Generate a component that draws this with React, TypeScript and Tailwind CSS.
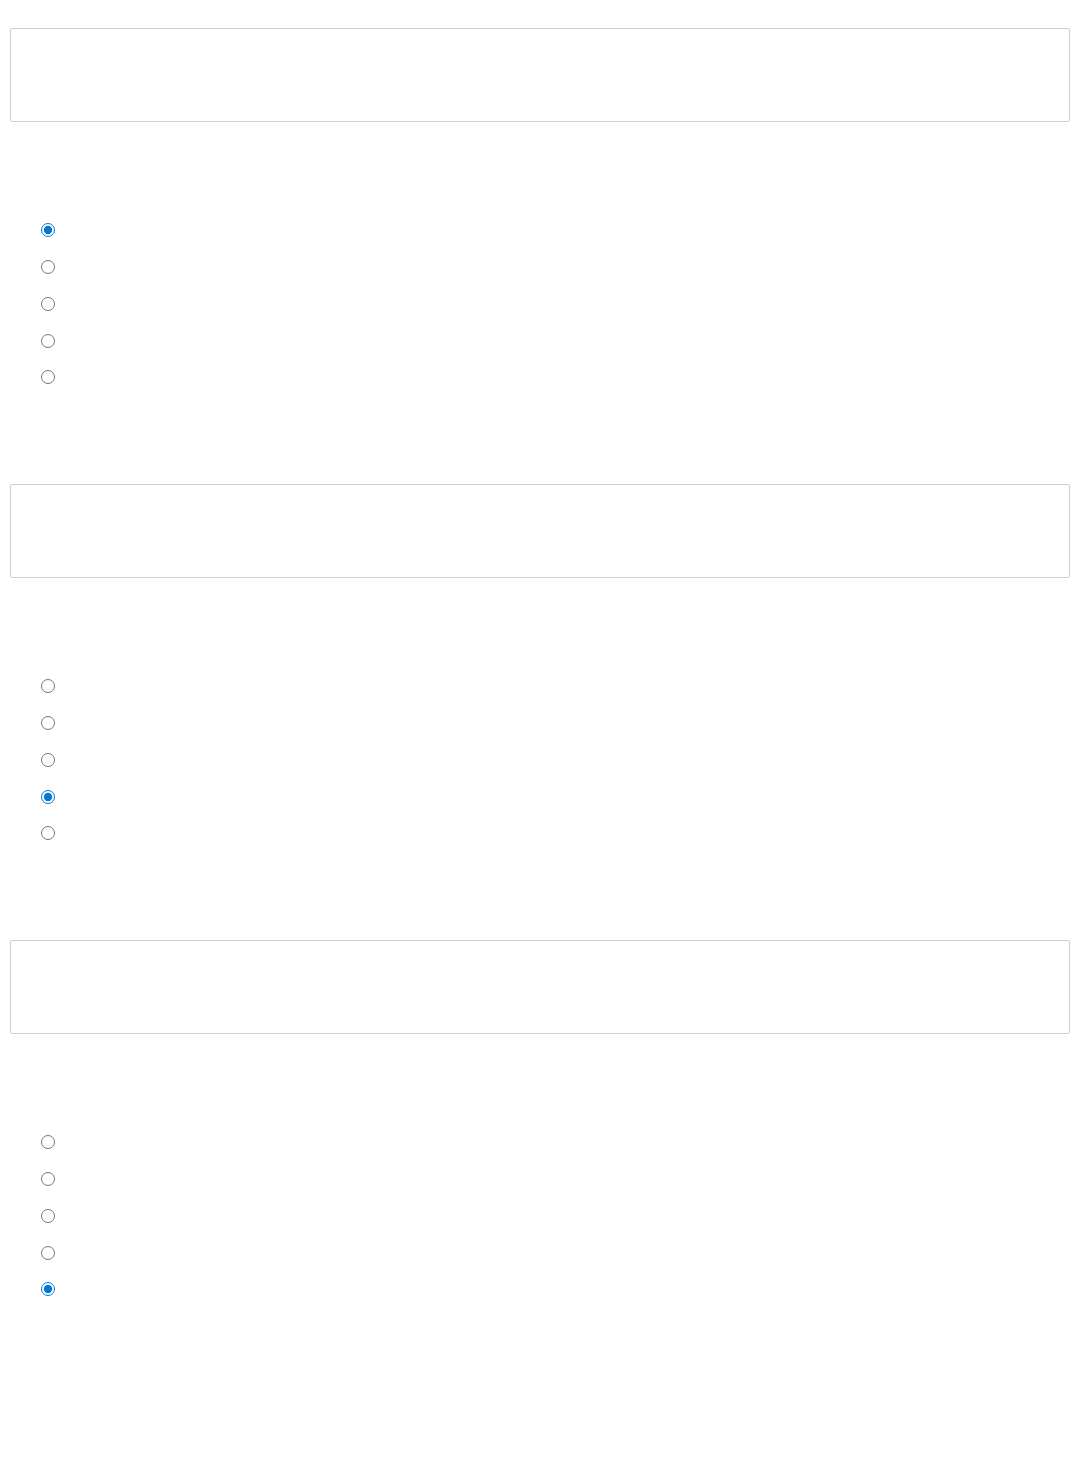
import React from 'react';

const sections = [
  { name: 'q1', checked: 0 },
  { name: 'q2', checked: 3 },
  { name: 'q3', checked: 4 },
];

export default function App() {
  return (
    <div className="min-h-[1480px] bg-white pl-[10px] pr-[9px] font-['Liberation_Sans',sans-serif]">
      {sections.map((s) => (
        <div key={s.name} className="h-[456px] pt-[28px]">
          <textarea
            readOnly
            className="block h-[94px] w-full resize-none rounded-[2px] border border-[#c9cfd8] bg-white"
          />
          <div className="mt-[90px] flex flex-col pl-[31px]">
            {[0, 1, 2, 3, 4].map((i) => (
              <label key={i} className="flex h-[36.75px] items-center">
                <input
                  type="radio"
                  name={s.name}
                  defaultChecked={i === s.checked}
                  className="h-[14px] w-[14px] accent-[#0078d4]"
                />
              </label>
            ))}
          </div>
        </div>
      ))}
    </div>
  );
}
